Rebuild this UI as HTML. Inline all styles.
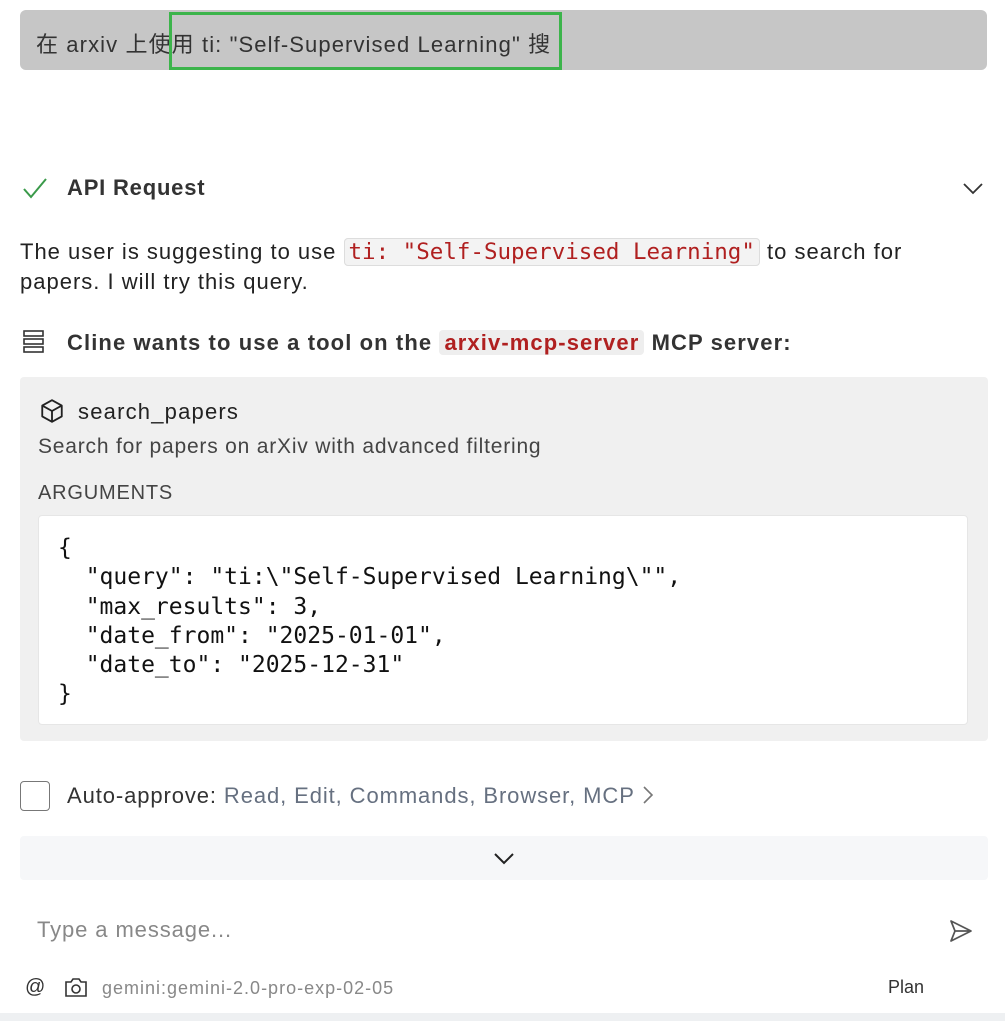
<!DOCTYPE html>
<html><head><meta charset="utf-8"><style>
body{margin:0;width:1005px;height:1021px;background:#fff;position:relative;overflow:hidden;font-family:"Liberation Sans","Noto Sans CJK SC",sans-serif;color:#222;}
.a{position:absolute;white-space:nowrap;}
.mono{font-family:"DejaVu Sans Mono","Liberation Mono",monospace;letter-spacing:0;}
</style></head><body>
<div class="a" style="left:20px;top:10px;width:967px;height:60px;background:#c6c6c6;border-radius:6px;"></div>
<div class="a" style="left:36px;top:27px;font-size:22px;letter-spacing:1.1px;color:#333;">在 arxiv 上使用 ti: "Self-Supervised Learning" 搜</div>
<div class="a" style="left:169px;top:12px;width:387px;height:52px;border:3px solid #3cb44b;"></div>

<svg class="a" style="left:22px;top:176px" width="26" height="24" viewBox="0 0 26 24"><path d="M2 13 L9 21 L24 3" fill="none" stroke="#3a9a4a" stroke-width="2"/></svg>
<div class="a" style="left:67px;top:175px;font-size:22px;letter-spacing:0.8px;font-weight:bold;color:#333;">API Request</div>
<svg class="a" style="left:962px;top:181px" width="22" height="14" viewBox="0 0 22 14"><path d="M2 3 L11 12 L20 3" fill="none" stroke="#333" stroke-width="1.8"/></svg>

<div class="a" style="left:20px;top:237px;font-size:22px;letter-spacing:1px;line-height:30px;color:#222;">The user is suggesting to use <span class="mono" style="font-size:22.5px;color:#b02020;background:#f3f3f3;border:1px solid #ddd;border-radius:4px;padding:0 4px;">ti: "Self-Supervised Learning"</span> to search for<br>papers. I will try this query.</div>

<svg class="a" style="left:22px;top:329px" width="24" height="26" viewBox="0 0 24 26"><g fill="none" stroke="#333" stroke-width="1.6"><rect x="2" y="2" width="19" height="5"/><rect x="2" y="10" width="19" height="5"/><rect x="2" y="18" width="19" height="5"/></g></svg>
<div class="a" style="left:67px;top:330px;font-size:22px;letter-spacing:1.1px;font-weight:bold;color:#333;">Cline wants to use a tool on the <span style="color:#b02020;background:#eee;border-radius:4px;padding:0 5px;">arxiv-mcp-server</span> MCP server:</div>

<div class="a" style="left:20px;top:377px;width:968px;height:364px;background:#f0f0f0;border-radius:4px;"></div>
<svg class="a" style="left:39px;top:398px" width="26" height="26" viewBox="0 0 24 24"><g fill="none" stroke="#222" stroke-width="1.7" stroke-linejoin="round"><path d="M12 2 L21 7 L21 17 L12 22 L3 17 L3 7 Z"/><path d="M3 7 L12 12 L21 7 M12 12 L12 22"/></g></svg>
<div class="a" style="left:78px;top:399px;font-size:22px;letter-spacing:1.2px;color:#222;">search_papers</div>
<div class="a" style="left:38px;top:435px;font-size:21px;letter-spacing:0.8px;color:#444;">Search for papers on arXiv with advanced filtering</div>
<div class="a" style="left:38px;top:482px;font-size:20px;letter-spacing:0.8px;color:#444;">ARGUMENTS</div>
<div class="a" style="left:38px;top:515px;width:930px;height:210px;background:#fff;border-radius:4px;border:1px solid #e6e6e6;box-sizing:border-box;"></div>
<pre class="a mono" style="white-space:pre;left:58px;top:534px;margin:0;font-size:23px;line-height:29.3px;color:#111;">{
  "query": "ti:\"Self-Supervised Learning\"",
  "max_results": 3,
  "date_from": "2025-01-01",
  "date_to": "2025-12-31"
}</pre>

<div class="a" style="left:20px;top:781px;width:30px;height:30px;border:1.5px solid #777;border-radius:4px;box-sizing:border-box;"></div>
<div class="a" style="left:67px;top:783px;font-size:22px;letter-spacing:0.9px;color:#333;">Auto-approve: <span style="color:#667080;">Read, Edit, Commands, Browser, MCP</span> <svg width="14" height="20" viewBox="0 0 14 20" style="vertical-align:-2px"><path d="M3 2 L11 10 L3 18" fill="none" stroke="#777" stroke-width="1.6"/></svg></div>

<div class="a" style="left:20px;top:836px;width:968px;height:44px;background:#f6f7f9;border-radius:4px;"></div>
<svg class="a" style="left:493px;top:852px" width="22" height="14" viewBox="0 0 22 14"><path d="M2 2 L11 11 L20 2" fill="none" stroke="#222" stroke-width="2"/></svg>

<div class="a" style="left:37px;top:917px;font-size:22px;letter-spacing:0.9px;color:#888;">Type a message...</div>
<svg class="a" style="left:948px;top:918px" width="26" height="26" viewBox="0 0 26 26"><path d="M3 3 L23 13 L3 23 L7 13 Z M7 13 L23 13" fill="none" stroke="#555" stroke-width="1.7" stroke-linejoin="round"/></svg>

<div class="a" style="left:25px;top:976px;font-size:20px;color:#333;">@</div>
<svg class="a" style="left:64px;top:976px" width="24" height="22" viewBox="0 0 24 22"><g fill="none" stroke="#333" stroke-width="1.6"><path d="M2 6 L7 6 L9 3 L15 3 L17 6 L22 6 L22 20 L2 20 Z"/><circle cx="12" cy="13" r="4"/></g></svg>
<div class="a" style="left:102px;top:978px;font-size:18px;letter-spacing:1px;color:#888;">gemini:gemini-2.0-pro-exp-02-05</div>
<div class="a" style="left:888px;top:977px;font-size:18px;color:#333;">Plan</div>
<div class="a" style="left:0;top:1013px;width:1005px;height:8px;background:#eef0f2;"></div>
</body></html>
